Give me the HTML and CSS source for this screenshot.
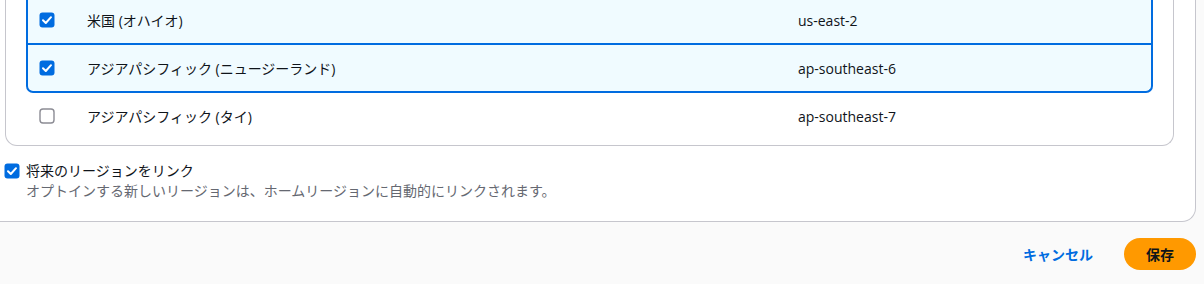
FILE: index.html
```html
<!DOCTYPE html>
<html lang="ja">
<head>
  <meta charset="UTF-8" />
  <meta name="viewport" content="width=device-width, initial-scale=1" />
  <title>リージョン設定</title>
  <link rel="stylesheet" href="styles.css">
</head>
<body>
  <div class="painel">
    <div class="tabela">
      <div class="linha selecionada primeira">
        <span class="caixa marcada">
          <svg viewBox="0 0 16 16" width="16" height="16"><rect x="0.5" y="0.5" width="15" height="15" rx="3" fill="#006ce0"/><path d="M4 8.3 L6.8 11 L12 5.2" fill="none" stroke="#fff" stroke-width="2" stroke-linecap="round" stroke-linejoin="round"/></svg>
        </span>
        <span class="nome">米国 (オハイオ)</span>
        <span class="codigo">us-east-2</span>
      </div>
      <div class="linha selecionada ultima">
        <span class="caixa marcada">
          <svg viewBox="0 0 16 16" width="16" height="16"><rect x="0.5" y="0.5" width="15" height="15" rx="3" fill="#006ce0"/><path d="M4 8.3 L6.8 11 L12 5.2" fill="none" stroke="#fff" stroke-width="2" stroke-linecap="round" stroke-linejoin="round"/></svg>
        </span>
        <span class="nome">アジアパシフィック (ニュージーランド)</span>
        <span class="codigo">ap-southeast-6</span>
      </div>
      <div class="linha">
        <span class="caixa">
          <svg viewBox="0 0 16 16" width="16" height="16"><rect x="1" y="1" width="14" height="14" rx="3" fill="#fff" stroke="#8c8c94" stroke-width="1.4"/></svg>
        </span>
        <span class="nome">アジアパシフィック (タイ)</span>
        <span class="codigo">ap-southeast-7</span>
      </div>
    </div>

    <div class="opcao">
      <span class="caixa marcada">
        <svg viewBox="0 0 16 16" width="16" height="16"><rect x="0.5" y="0.5" width="15" height="15" rx="3" fill="#006ce0"/><path d="M4 8.3 L6.8 11 L12 5.2" fill="none" stroke="#fff" stroke-width="2" stroke-linecap="round" stroke-linejoin="round"/></svg>
      </span>
      <div>
        <div class="rotulo">将来のリージョンをリンク</div>
        <div class="descricao">オプトインする新しいリージョンは、ホームリージョンに自動的にリンクされます。</div>
      </div>
    </div>
  </div>

  <div class="rodape">
    <button class="botao-link">キャンセル</button>
    <button class="botao-principal">保存</button>
  </div>
</body>
</html>
```

FILE: styles.css
```css
:root {
  --azul: #006ce0;
  --azul-fundo: #f0fbff;
  --texto: #0f141a;
  --cinza: #656871;
  --borda: #c6c6cd;
  --laranja: #ff9900;
}

body {
  margin: 0;
  width: 1204px;
  height: 284px;
  overflow: hidden;
  font-family: "Open Sans", "Noto Sans CJK JP", sans-serif;
  font-size: 14px;
  color: var(--texto);
  background: #fafafa;
}

.painel {
  display: flow-root;
  width: 1196px;
  box-sizing: border-box;
  height: 222px;
  background: #fff;
  border-right: 1px solid var(--borda);
  border-bottom: 1px solid var(--borda);
  border-bottom-right-radius: 14px;
  padding: 0 21px 0 5px;
}

.tabela {
  margin-top: -3px;
  border: 1px solid var(--borda);
  border-top: none;
  border-radius: 0 0 12px 12px;
  padding: 0 20px 4px 20px;
}

.linha {
  display: flex;
  align-items: center;
  height: 46px;
  border: 2px solid transparent;
  border-top: none;
  box-sizing: content-box;
}

.linha.selecionada {
  background: var(--azul-fundo);
  border-left-color: var(--azul);
  border-right-color: var(--azul);
  border-bottom-color: var(--azul);
}

.linha.ultima {
  border-radius: 0 0 7px 7px;
}

.linha .caixa {
  margin-left: 11px;
  width: 16px;
  height: 16px;
}

.caixa svg {
  display: block;
}

.nome {
  margin-left: 32px;
  width: 711px;
}

.codigo {
  flex: 1;
}

.opcao {
  display: flex;
  gap: 6px;
  margin-top: 15px;
  margin-left: -1px;
}

.opcao .caixa {
  margin-top: 2px;
}

.rotulo {
  line-height: 20px;
}

.descricao {
  line-height: 20px;
  color: var(--cinza);
}

.rodape {
  display: flex;
  justify-content: flex-end;
  align-items: center;
  gap: 31px;
  padding: 16px 8px 0 0;
}

.botao-link {
  font-family: inherit;
  font-size: 14px;
  font-weight: 700;
  color: var(--azul);
  background: none;
  border: none;
  padding: 0;
}

.botao-principal {
  font-family: inherit;
  font-size: 14px;
  font-weight: 700;
  color: var(--texto);
  background: var(--laranja);
  border: none;
  border-radius: 16px;
  width: 72px;
  height: 32px;
}
```
